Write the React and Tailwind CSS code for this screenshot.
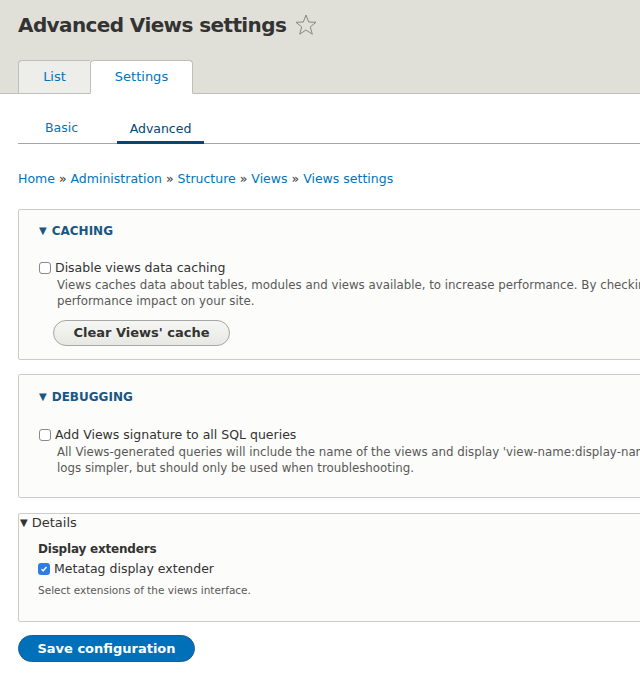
import { useState } from "react";

const font = { fontFamily: '"DejaVu Sans", "Liberation Sans", sans-serif' };

function Legend({ title }) {
    return (
        <div className="flex items-center gap-[5px] text-[12px] font-bold text-[#1a5784] uppercase leading-none">
            <span className="text-[10px]">▼</span>
            <span>{title}</span>
        </div>
    );
}

function Checkbox({ checked }) {
    if (checked) {
        return (
            <span className="w-[12px] h-[12px] rounded-[3px] bg-[#2f7de1] flex items-center justify-center shrink-0">
                <svg width="8" height="8" viewBox="0 0 8 8">
                    <path d="M1.5 4.2 L3.2 5.8 L6.5 2" fill="none" stroke="white" strokeWidth="1.4" />
                </svg>
            </span>
        );
    }
    return <span className="w-[12px] h-[12px] rounded-[3px] border border-[#8a8a8a] bg-white shrink-0" />;
}

function CheckRow({ label, checked }) {
    return (
        <div className="flex items-center gap-[4px] text-[12.5px] text-[#333]">
            <Checkbox checked={checked} />
            <span>{label}</span>
        </div>
    );
}

export default function App() {
    const [tab] = useState("advanced");
    return (
        <div className="w-[640px] h-[693px] overflow-hidden bg-white" style={font}>
            <div className="bg-[#e0e0d8] border-b border-[#bfbfba] pt-[11px] pl-[18px] whitespace-nowrap">
                <div className="flex items-center gap-[8px] h-[28px]">
                    <h1 className="text-[20px] font-bold text-[#333] tracking-[-0.6px]">Advanced Views settings</h1>
                    <svg width="24" height="24" viewBox="0 0 24 24">
                        <path d="M12 2 L14.7 9 L22 9.3 L16.3 13.9 L18.3 21.2 L12 17 L5.7 21.2 L7.7 13.9 L2 9.3 L9.3 9 Z" fill="none" stroke="#888" strokeWidth="1" strokeLinejoin="round" />
                    </svg>
                </div>
                <div className="flex mt-[21px] -mb-px text-[13px]">
                    <div className="w-[72px] h-[34px] flex items-center justify-center bg-[#ededea] border border-[#bfbfba] border-r-0 rounded-tl-[4px] text-[#0074bd]">List</div>
                    <div className="w-[103px] h-[34px] flex items-center justify-center bg-white border border-[#bfbfba] border-b-white rounded-t-[4px] text-[#0074bd]">Settings</div>
                </div>
            </div>
            <div className="pl-[18px] whitespace-nowrap">
                <div className="flex border-b border-[#a6a6a6] h-[50px] items-end text-[12.5px]">
                    <div className="w-[99px] h-[34px] pl-[27px] text-[#0074bd] pt-[10px]">Basic</div>
                    <div className="w-[87px] h-[34px] flex justify-center text-[#004875] pt-[10px] border-b-[3px] border-[#004875] -mb-px">{tab === "advanced" ? "Advanced" : ""}</div>
                </div>
                <div className="mt-[26px] text-[12.5px] text-[#0074bd]">
                    Home <span className="text-[#333]">»</span> Administration <span className="text-[#333]">»</span> Structure <span className="text-[#333]">»</span> Views <span className="text-[#333]">»</span> Views settings
                </div>

                <div className="mt-[20px] w-[640px] border border-[#ccc] rounded-[2px] bg-[#fcfcfa] h-[151px] pt-[15px] pl-[20px]">
                    <Legend title="Caching" />
                    <div className="mt-[22px]">
                        <CheckRow label="Disable views data caching" />
                        <div className="pl-[18px] text-[11.8px] text-[#595959] leading-[16px] -mt-[1px]">
                            <div>Views caches data about tables, modules and views available, to increase performance. By checking this box, Views will skip this cache and</div>
                            <div>performance impact on your site.</div>
                        </div>
                        <button className="mt-[11px] ml-[14px] h-[26px] w-[177px] rounded-full border border-[#a6a6a6] bg-gradient-to-b from-[#f6f6f3] to-[#e8e8e3] text-[13px] font-bold text-[#333]">
                            Clear Views' cache
                        </button>
                    </div>
                </div>

                <div className="mt-[14px] w-[640px] border border-[#ccc] rounded-[2px] bg-[#fcfcfa] h-[124px] pt-[16px] pl-[20px]">
                    <Legend title="Debugging" />
                    <div className="mt-[23px]">
                        <CheckRow label="Add Views signature to all SQL queries" />
                        <div className="pl-[18px] text-[11.8px] text-[#595959] leading-[16px] -mt-[1px]">
                            <div>All Views-generated queries will include the name of the views and display 'view-name:display-name' as a string at the end of the SELECT</div>
                            <div>logs simpler, but should only be used when troubleshooting.</div>
                        </div>
                    </div>
                </div>

                <div className="mt-[15px] w-[640px] border border-[#ccc] rounded-[2px] bg-[#fcfcfa] h-[109px]">
                    <div className="flex items-center gap-[4px] text-[13px] text-[#333] h-[18px] pl-[1px]">
                        <span className="text-[10px]">▼</span>
                        <span>Details</span>
                    </div>
                    <div className="pl-[19px] pt-[8px]">
                        <div className="text-[12px] font-bold text-[#333] tracking-[-0.2px]">Display extenders</div>
                        <div className="mt-[2px]">
                            <CheckRow label="Metatag display extender" checked />
                        </div>
                        <div className="mt-[4px] text-[10.5px] text-[#595959]">Select extensions of the views interface.</div>
                    </div>
                </div>

                <button className="mt-[13px] h-[27px] w-[177px] rounded-full bg-[#0071b8] border border-[#1e5c90] text-white text-[13px] font-bold">
                    Save configuration
                </button>
            </div>
        </div>
    );
}
